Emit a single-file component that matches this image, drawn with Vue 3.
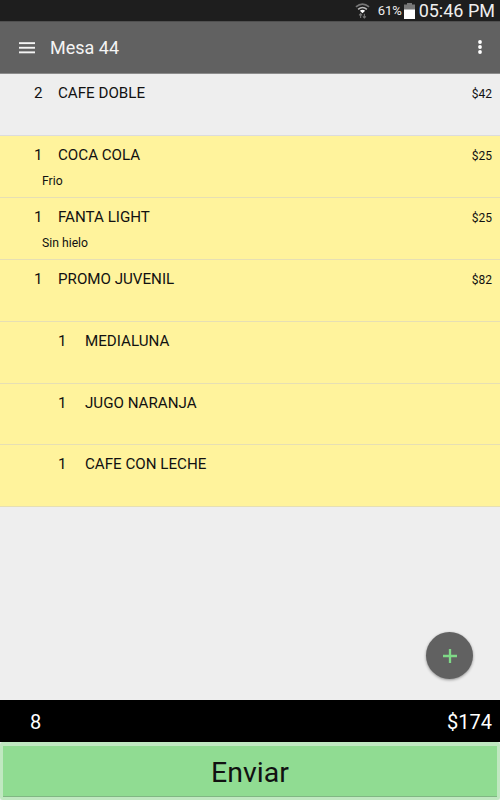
<template>
  <div class="screen">
    <div class="statusbar">
      <svg class="wifi" width="15" height="17" viewBox="0 0 16 18" fill="none">
        <path d="M1 5.2Q8 -.8 15 5.2" stroke="#777" stroke-width="1.7" />
        <path d="M3.3 7.8Q8 3.7 12.7 7.8" stroke="#bbb" stroke-width="1.6" />
        <path d="M5.2 9.2Q8 7 10.8 9.2L8 12Z" fill="#fff" />
        <path d="M6 17v-4.5M4.4 14.2L6 12.4l1.6 1.8M10 12.5V17M8.4 15.2L10 17l1.6-1.8" stroke="#777" stroke-width="1.2" />
      </svg>
      <span class="percent">61%</span>
      <svg class="battery" width="11" height="16" viewBox="0 0 11 16">
        <path d="M3 0h5v1.5h3V7H0V1.5h3z" fill="#777" />
        <path d="M0 6.5h11V16H0z" fill="#fff" />
      </svg>
      <span class="clock">05:46 PM</span>
    </div>

    <div class="toolbar">
      <svg class="menu" width="16" height="12" viewBox="0 0 16 12" fill="#f4f4f4">
        <rect width="16" height="1.9" y="0.2" />
        <rect width="16" height="1.9" y="4.8" />
        <rect width="16" height="1.9" y="9.4" />
      </svg>
      <span class="title">Mesa 44</span>
      <svg class="more" width="4" height="14" viewBox="0 0 4 14" fill="#fff">
        <circle cx="2" cy="2" r="1.9" />
        <circle cx="2" cy="7" r="1.9" />
        <circle cx="2" cy="12" r="1.9" />
      </svg>
    </div>

    <div class="list">
      <div
        v-for="item in items"
        :key="item.name"
        class="item"
        :class="{ pending: item.pending, child: item.child }"
      >
        <div class="line">
          <span class="qty">{{ item.qty }}</span>
          <span class="name">{{ item.name }}</span>
          <span v-if="item.price" class="price">${{ item.price }}</span>
        </div>
        <div v-if="item.note" class="note">{{ item.note }}</div>
      </div>

      <button class="fab">
        <svg width="16" height="16" viewBox="0 0 16 16" stroke="#7fd987" stroke-width="2.3">
          <path d="M8 1v14M1 8h14" />
        </svg>
      </button>
    </div>

    <div class="totals">
      <span>{{ count }}</span>
      <span>${{ total }}</span>
    </div>
    <div class="send-wrap">
      <button class="send">Enviar</button>
    </div>
  </div>
</template>

<script setup>
import { ref, computed } from 'vue'

const items = ref([
  { qty: 2, name: 'CAFE DOBLE', price: 42 },
  { qty: 1, name: 'COCA COLA', price: 25, note: 'Frio', pending: true },
  { qty: 1, name: 'FANTA LIGHT', price: 25, note: 'Sin hielo', pending: true },
  { qty: 1, name: 'PROMO JUVENIL', price: 82, pending: true },
  { qty: 1, name: 'MEDIALUNA', pending: true, child: true },
  { qty: 1, name: 'JUGO NARANJA', pending: true, child: true },
  { qty: 1, name: 'CAFE CON LECHE', pending: true, child: true }
])

const count = computed(() => items.value.reduce((sum, item) => sum + item.qty, 0))
const total = computed(() => items.value.reduce((sum, item) => sum + (item.price || 0), 0))
</script>

<style>
body {
  margin: 0;
}
</style>

<style scoped>
.screen {
  display: flex;
  flex-direction: column;
  width: 500px;
  height: 800px;
  overflow: hidden;
  background: #eee;
  color: #111;
  font-family: Roboto, sans-serif;
}

.statusbar {
  display: flex;
  align-items: center;
  justify-content: flex-end;
  box-sizing: border-box;
  height: 21px;
  padding-right: 5px;
  background: #1e1e1e;
  color: #eee;
}

.wifi {
  margin-right: 8px;
}

.percent {
  width: 26px;
  font-size: 13px;
  line-height: 21px;
  white-space: nowrap;
}

.battery {
  margin-right: 4px;
}

.clock {
  font-size: 18px;
  line-height: 21px;
}

.toolbar {
  display: flex;
  align-items: center;
  box-sizing: border-box;
  height: 53px;
  padding: 0 18px 0 19px;
  background: #616161;
  border-top: 1px solid #505050;
  border-bottom: 1px solid #8c8c8c;
}

.title {
  flex: 1;
  margin-left: 15px;
  font-size: 18px;
  line-height: 24px;
  color: #f4f4f4;
}

.more {
  margin-bottom: 1px;
}

.list {
  position: relative;
  flex: 1;
}

.item {
  box-sizing: border-box;
  height: 61.92px;
  padding: 9px 8px 0 34px;
  border-bottom: 1px solid #dcdcdc;
}

.pending {
  background: #fff39c;
  border-bottom-color: #e6dfb4;
}

.child {
  padding-left: 58px;
}

.line {
  display: flex;
  align-items: center;
  height: 20px;
  font-size: 15.15px;
}

.qty {
  width: 24px;
}

.child .qty {
  width: 27px;
}

.name {
  flex: 1;
}

.price {
  font-size: 12px;
  padding-top: 2px;
}

.note {
  margin: 8px 0 0 8px;
  font-size: 12.2px;
  line-height: 16px;
}

.fab {
  position: absolute;
  right: 27px;
  bottom: 21px;
  display: flex;
  align-items: center;
  justify-content: center;
  width: 47px;
  height: 47px;
  padding: 0;
  border: 0;
  border-radius: 50%;
  background: #616161;
  box-shadow: 0 1px 3px rgba(0, 0, 0, 0.4);
}

.totals {
  display: flex;
  align-items: center;
  justify-content: space-between;
  box-sizing: border-box;
  height: 42px;
  padding: 2px 8px 0 30px;
  background: #000;
  color: #fff;
  font-size: 20px;
}

.send-wrap {
  display: flex;
  box-sizing: border-box;
  height: 58px;
  padding: 4px 3px 3px;
  background: #c0e8c1;
  border-radius: 3px;
}

.send {
  flex: 1;
  padding: 2px 0 0;
  border: 0;
  border-bottom: 1px solid #80b783;
  background: #90dc92;
  color: #111;
  font-family: inherit;
  font-size: 28.5px;
}
</style>
